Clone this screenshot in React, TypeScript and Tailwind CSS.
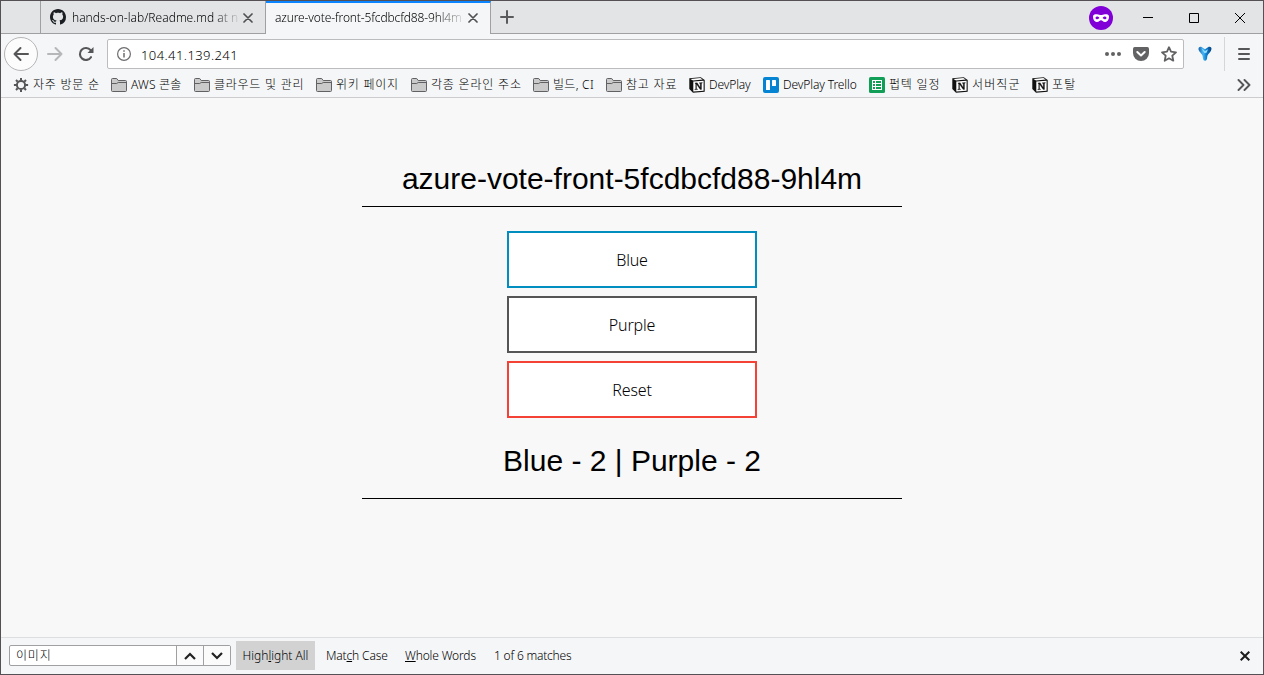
import type { ReactNode } from 'react';

const CONTENT_FONT = "font-['Liberation_Sans',Arial,sans-serif]";

function GithubIcon() {
  return (
    <svg width="16" height="16" viewBox="0 0 16 16" fill="#1b1f23" className="shrink-0">
      <path d="M8 0C3.58 0 0 3.58 0 8c0 3.54 2.29 6.53 5.47 7.59.4.07.55-.17.55-.38 0-.19-.01-.82-.01-1.49-2.01.37-2.53-.49-2.69-.94-.09-.23-.48-.94-.82-1.13-.28-.15-.68-.52-.01-.53.63-.01 1.08.58 1.23.82.72 1.21 1.87.87 2.33.66.07-.52.28-.87.51-1.07-1.78-.2-3.64-.89-3.64-3.95 0-.87.31-1.59.82-2.15-.08-.2-.36-1.02.08-2.12 0 0 .67-.21 2.2.82.64-.18 1.32-.27 2-.27s1.36.09 2 .27c1.53-1.04 2.2-.82 2.2-.82.44 1.1.16 1.92.08 2.12.51.56.82 1.27.82 2.15 0 3.07-1.87 3.75-3.65 3.95.29.25.54.73.54 1.48 0 1.07-.01 1.93-.01 2.2 0 .21.15.46.55.38A8.01 8.01 0 0 0 16 8c0-4.42-3.58-8-8-8z" />
    </svg>
  );
}

function TabClose() {
  return (
    <svg width="10" height="10" viewBox="0 0 10 10" fill="none" stroke="#505053" strokeWidth="1.7" strokeLinecap="round" className="shrink-0">
      <path d="M1 1l8 8M9 1L1 9" />
    </svg>
  );
}

function Folder() {
  return (
    <svg width="16" height="14" viewBox="0 0 16 14" fill="#cacacb" stroke="#616163" strokeLinejoin="round" className="shrink-0">
      <path d="M.5 12V1.500a1 1 0 0 1 1-1h4.200l1.500 2h7.300a1 1 0 0 1 1 1V12.500a1 1 0 0 1-1 1h-13a1 1 0 0 1-1-1z" />
      <path d="M.5 5.500h5.200l1.500-1h8.300" fill="none" />
    </svg>
  );
}

function Gear() {
  return (
    <svg width="16" height="16" viewBox="0 0 16 16" fill="none" stroke="#565659" className="shrink-0">
      <circle cx="8" cy="8" r="4.100" strokeWidth="2" />
      <path d="M8 .9v2.500M8 12.600v2.500M.9 8h2.500M12.600 8h2.500M3 3l1.700 1.700M11.300 11.300l1.700 1.700M13 3l-1.700 1.700M4.700 11.300L3 13" strokeWidth="2" />
    </svg>
  );
}

function Notion() {
  return (
    <svg width="16" height="16" viewBox="0 0 16 16" className="shrink-0">
      <path d="M.3 1.300L11.800.3 15.700 3v11.700L4 15.700.3 12z" fill="#111" />
      <path d="M1.500 1.900l9.900-.8 2.300 1.500L4 3.400z" fill="#fff" />
      <path d="M4.300 4.500l10.300-.7v9.900L4.300 14.500z" fill="#fff" />
      <path d="M6 5.900l2.200-.1 3 4.800V6.500l-.9-.2v-.6l3-.1v.5l-.8.300v6l-1.300.2-3.700-5.400v4.600l1 .3v.5l-2.700.2v-.5l.9-.4V6.700L6 6.400z" fill="#111" stroke="#111" strokeWidth=".3" />
    </svg>
  );
}

function Trello() {
  return (
    <svg width="16" height="16" viewBox="0 0 16 16" className="shrink-0">
      <rect width="16" height="16" rx="2" fill="#0584d3" />
      <rect x="3" y="3" width="4" height="10" rx=".6" fill="#fff" />
      <rect x="9" y="3" width="4" height="6" rx=".6" fill="#fff" />
    </svg>
  );
}

function Sheets() {
  return (
    <svg width="16" height="16" viewBox="0 0 16 16" className="shrink-0">
      <rect width="16" height="16" rx="1.500" fill="#119f58" />
      <path d="M3 3h10v10H3z" fill="#fff" />
      <path d="M4 4h2v2H4zM7 4h5v2H7zM4 7h2v2H4zM7 7h5v2H7zM4 10h2v2H4zM7 10h5v2H7z" fill="#119f58" />
    </svg>
  );
}

function Bookmark({ icon, width, children }: { icon: ReactNode; width: string; children: ReactNode }) {
  return (
    <div className="flex items-center gap-1">
      {icon}
      <span className={width}>{children}</span>
    </div>
  );
}

function TitleBar() {
  return (
    <div className="flex h-[33px] shrink-0 bg-[#e3e4e6]">
      <div className="w-10 shrink-0 border-r border-b border-[#a0a0a2]" />
      <div className="flex w-[225px] shrink-0 items-center border-r border-b border-[#a0a0a2] pl-[9px]">
        <GithubIcon />
        <div className="mt-0.5 ml-1.5 w-[166px] bg-linear-to-r from-black from-85% to-[#00000020] bg-clip-text tracking-[0.02px] text-transparent">
          hands-on-lab/Readme.md at n
        </div>
        <div className="mt-px ml-[5px]"><TabClose /></div>
      </div>
      <div className="flex w-[225px] shrink-0 items-center border-t-2 border-r border-t-[#0a84ff] border-r-[#a0a0a2] bg-[#f5f6f7] pb-px pl-[9px]">
        <div className="w-[188px] bg-linear-to-r from-black from-85% to-[#00000020] bg-clip-text tracking-[-0.13px] text-transparent">
          azure-vote-front-5fcdbcfd88-9hl4m
        </div>
        <div className="ml-[5px]"><TabClose /></div>
      </div>
      <div className="flex flex-1 items-center border-b border-[#a0a0a2]">
        <svg width="14" height="14" viewBox="0 0 14 14" stroke="#5a5a5c" strokeWidth="2" strokeLinecap="round" className="ml-[9px]">
          <path d="M7 1v12M1 7h12" />
        </svg>
        <svg width="24" height="24" viewBox="0 0 24 24" className="mt-px ml-auto">
          <circle cx="12" cy="12" r="12" fill="#8000d7" />
          <path d="M4 10.500C4 8.500 5.800 8.100 8 8.200c1.800.1 2.700.8 4 .8s2.200-.7 4-.8c2.200-.1 4 .3 4 2.300 0 3-1.600 5.500-4 5.500-2.200 0-2.800-1.700-4-1.700S10.200 16 8 16c-2.400 0-4-2.500-4-5.500z" fill="#fff" />
          <path d="M6.300 11.900c.6-1 1.300-1.400 2.200-1.300.9.100 1.500.8 1.900 1.500-.7.800-1.300 1.100-2.100 1.100s-1.500-.5-2-1.300zM17.700 11.900c-.6-1-1.300-1.400-2.200-1.300-.9.100-1.500.8-1.900 1.500.7.800 1.300 1.100 2.100 1.100s1.500-.5 2-1.300z" fill="#8000d7" />
        </svg>
        <div className="mt-px mr-[18px] ml-[30px] flex items-center gap-9 text-black">
          <svg width="10" height="10" viewBox="0 0 10 10"><path d="M0 4h10v1H0z" /></svg>
          <svg width="10" height="10" viewBox="0 0 10 10" fill="none" stroke="currentColor"><path d="M.5.500h9v9h-9z" /></svg>
          <svg width="10" height="10" viewBox="0 0 10 10" fill="none" stroke="currentColor"><path d="M0 0l10 10M10 0L0 10" /></svg>
        </div>
      </div>
    </div>
  );
}

function NavBar() {
  return (
    <div className="flex h-10 shrink-0 items-center pl-[3px]">
      <div className="flex size-[34px] shrink-0 items-center justify-center rounded-full border border-[#b5b5b7] bg-[#fcfcfc]">
        <svg width="16" height="16" viewBox="0 0 16 16" fill="none" stroke="#565659" strokeWidth="2" strokeLinecap="round" strokeLinejoin="round">
          <path d="M15 8H1.500M7.500 2l-6 6 6 6" />
        </svg>
      </div>
      <svg width="16" height="16" viewBox="0 0 16 16" fill="none" stroke="#b6b7b8" strokeWidth="2" strokeLinecap="round" strokeLinejoin="round" className="ml-[9px]">
        <path d="M1 8h13.500M8.500 2l6 6-6 6" />
      </svg>
      <svg width="16" height="16" viewBox="0 0 16 16" className="ml-[15px]">
        <path d="M13 11.200A6 6 0 1 1 12.600 4.200" fill="none" stroke="#565659" strokeWidth="2.100" strokeLinecap="round" />
        <path d="M15.500 1v5.500a.5.500 0 0 1-.5.500H9.500z" fill="#565659" />
      </svg>
      <div className="ml-[13px] flex h-[30px] w-[1077px] shrink-0 items-center rounded-xs border border-[#bcbcbe] bg-white pl-[9px]">
        <svg width="14" height="14" viewBox="0 0 14 14" fill="none" stroke="#6d6d70">
          <circle cx="7" cy="7" r="6.400" strokeWidth="1.200" />
          <path d="M7 6v4.500M7 3.300v1.400" strokeWidth="1.500" />
        </svg>
        <span className="mt-0.5 ml-[10px] text-[13px] tracking-[0.42px] text-black">104.41.139.241</span>
        <svg width="16" height="4" viewBox="0 0 16 4" fill="#626264" className="ml-auto">
          <circle cx="2" cy="2" r="2" /><circle cx="8" cy="2" r="2" /><circle cx="14" cy="2" r="2" />
        </svg>
        <svg width="16" height="14" viewBox="0 0 16 14" className="ml-3">
          <path d="M1.700 0h12.600A1.700 1.700 0 0 1 16 1.700V6A8 8 0 0 1 0 6V1.700A1.700 1.700 0 0 1 1.700 0z" fill="#626264" />
          <path d="M4.300 5L8 8.500 11.700 5" fill="none" stroke="#fff" strokeWidth="2" strokeLinecap="round" strokeLinejoin="round" />
        </svg>
        <svg width="16" height="16" viewBox="0 0 16 16" fill="none" stroke="#626264" strokeWidth="1.800" strokeLinejoin="round" className="mr-1.5 ml-3">
          <path d="M8 1.200l2 4.500 5 .6-3.700 3.400 1 5L8 12.300l-4.300 2.400 1-5L1 6.300l5-.6z" />
        </svg>
      </div>
      <svg width="16" height="16" viewBox="0 0 16 16" className="ml-[13px]">
        <defs>
          <linearGradient id="yfill" x1="0" y1="0" x2="1" y2="0">
            <stop offset="0" stopColor="#1a5fae" /><stop offset=".35" stopColor="#45b8f2" /><stop offset=".6" stopColor="#0d7fd0" /><stop offset="1" stopColor="#07407f" />
          </linearGradient>
        </defs>
        <path d="M1.500 3C1.500.800 3.600.300 5 1.300L8 3.200l3-1.900c1.500-1 3.600-.5 3.500 1.700-.2 2.700-3.500 4.800-4.100 6.800-.4 1.600 0 4.700-2.200 5-2.500.2-2.200-3.400-2.600-5C5.100 7.800 1.500 5.500 1.500 3z" fill="url(#yfill)" />
        <path d="M4.500 2.500L8 5l3-1.800-1.500 3.500-2 .6z" fill="#92dcff" />
      </svg>
      <div className="ml-[11px] h-[34px] w-px bg-[#d5d6d8]" />
      <svg width="12" height="12" viewBox="0 0 12 12" fill="none" stroke="#565659" strokeWidth="2" strokeLinecap="round" className="ml-[13px]">
        <path d="M1 1h10M1 6h10M1 11h10" />
      </svg>
    </div>
  );
}

function BookmarksBar() {
  return (
    <div className="flex h-[24px] shrink-0 items-center gap-3 border-b border-[#ccccce] pl-3 pb-px whitespace-nowrap">
      <Bookmark icon={<Gear />} width="w-[66px] tracking-[0.75px]">자주 방문 순</Bookmark>
      <Bookmark icon={<Folder />} width="w-[51px] tracking-[0.2px]">AWS 콘솔</Bookmark>
      <Bookmark icon={<Folder />} width="w-[90px] tracking-[0.75px]">클라우드 및 관리</Bookmark>
      <Bookmark icon={<Folder />} width="w-[63px] tracking-[0.75px]">위키 페이지</Bookmark>
      <Bookmark icon={<Folder />} width="w-[90px] tracking-[0.8px]">각종 온라인 주소</Bookmark>
      <Bookmark icon={<Folder />} width="w-[41px] tracking-[0.3px]">빌드, CI</Bookmark>
      <Bookmark icon={<Folder />} width="w-[51px] tracking-[0.8px]">참고 자료</Bookmark>
      <Bookmark icon={<Notion />} width="w-[42px] tracking-[-0.12px]">DevPlay</Bookmark>
      <Bookmark icon={<Trello />} width="w-[74px] tracking-[-0.1px]">DevPlay Trello</Bookmark>
      <Bookmark icon={<Sheets />} width="w-[51px] tracking-[0.8px]">펍텍 일정</Bookmark>
      <Bookmark icon={<Notion />} width="w-[48px] tracking-[1.1px]">서버직군</Bookmark>
      <Bookmark icon={<Notion />} width="w-[24px] tracking-[1.2px]">포탈</Bookmark>
      <svg width="14" height="12" viewBox="0 0 14 12" fill="none" stroke="#565659" strokeWidth="1.900" strokeLinecap="round" strokeLinejoin="round" className="mr-3 ml-auto">
        <path d="M1.500 1l5 5-5 5M7.500 1l5 5-5 5" />
      </svg>
    </div>
  );
}

function VoteButton({ color, children }: { color: string; children: ReactNode }) {
  return (
    <button className={`flex h-[57px] w-[250px] items-center justify-center border-2 bg-white text-[16px] tracking-[-0.15px] text-black ${color}`}>
      {children}
    </button>
  );
}

function VotePage() {
  return (
    <main className="flex flex-1 flex-col items-center bg-[#f8f8f8] text-black">
      <div className={`mt-[62px] flex h-[47px] w-[540px] justify-center border-b border-black text-[30px] leading-[38px] font-normal ${CONTENT_FONT}`}>
        azure-vote-front-5fcdbcfd88-9hl4m
      </div>
      <div className="mt-6 flex flex-col gap-2">
        <VoteButton color="border-[#008dbf]">Blue</VoteButton>
        <VoteButton color="border-[#555555]">Purple</VoteButton>
        <VoteButton color="border-[#f44336]">Reset</VoteButton>
      </div>
      <div className={`mt-6 flex h-[57px] w-[540px] justify-center border-b border-black text-[30px] leading-[38px] font-normal ${CONTENT_FONT}`}>
        Blue - 2 | Purple - 2
      </div>
    </main>
  );
}

function FindBar() {
  return (
    <div className="flex h-[37px] shrink-0 items-center border-t border-[#dddee0] pb-px pl-2 tracking-[-0.15px] whitespace-nowrap">
      <div className="flex h-[21px] w-[222px] rounded-xs border border-[#a0a0a2] bg-white">
        <div className="w-[167px] border-r border-[#a0a0a2] pl-1.5 text-[12px] leading-[19px] tracking-[0.8px] text-black">이미지</div>
        <button className="flex w-[27px] items-center justify-center border-r border-[#a0a0a2] bg-[#fbfbfb]">
          <svg width="12" height="8" viewBox="0 0 12 8" fill="none" stroke="#222" strokeWidth="2.200"><path d="M1 7l5-5 5 5" /></svg>
        </button>
        <button className="flex flex-1 items-center justify-center bg-[#fbfbfb]">
          <svg width="12" height="8" viewBox="0 0 12 8" fill="none" stroke="#222" strokeWidth="2.200"><path d="M1 1l5 5 5-5" /></svg>
        </button>
      </div>
      <button className="ml-[5px] h-[29px] w-[79px] bg-[#d2d2d3] tracking-normal">High<u>l</u>ight All</button>
      <div className="ml-[11px] w-[79px]">Mat<u>c</u>h Case</div>
      <div className="w-[89px]"><u>W</u>hole Words</div>
      <div className="tracking-[-0.2px]">1 of 6 matches</div>
      <svg width="10" height="10" viewBox="0 0 10 10" fill="none" stroke="#1c1c1c" strokeWidth="2" className="mr-[13px] ml-auto">
        <path d="M.700.700l8.600 8.600M9.300.700L.700 9.300" />
      </svg>
    </div>
  );
}

export default function App() {
  return (
    <div className="flex h-[675px] w-[1264px] flex-col overflow-hidden border border-[#545053] bg-[#f5f6f7] font-['Noto_Sans','Noto_Sans_CJK_KR',sans-serif] text-[12px] leading-4 font-light text-black [&_*]:whitespace-nowrap">
      <TitleBar />
      <NavBar />
      <BookmarksBar />
      <VotePage />
      <FindBar />
    </div>
  );
}
